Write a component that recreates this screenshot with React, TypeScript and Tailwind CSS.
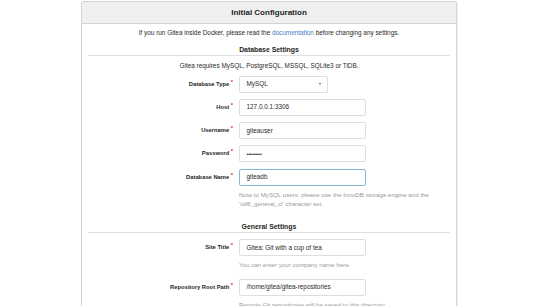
import React from "react";

const Label = ({ text }: { text: string }) => (
  <div className="w-[145px] mr-[6px] text-right text-[5.8px] font-bold text-[#1e1e1e] leading-[17px]">
    {text}
    <span className="relative -top-[2px] ml-[1.5px] text-[#db2828]">*</span>
  </div>
);

const Field = ({ label, children }: { label: string; children: React.ReactNode }) => (
  <div className="flex items-center h-[17px]">
    <Label text={label} />
    {children}
  </div>
);

const TextBox = ({ value, focus, password }: { value: string; focus?: boolean; password?: boolean }) => (
  <div
    className={`w-[127px] h-[17px] rounded-[2px] border bg-white pl-[6.5px] flex items-center text-[6.4px] text-[#2a2a2a] ${
      focus ? "border-[#85b7d9]" : "border-[#dedede]"
    }`}
  >
    {password ? <span className="text-[5.4px] tracking-[-0.2px]">•••••••••</span> : value}
  </div>
);

const App = () => {
  return (
    <div className="w-[550px] h-[306px] overflow-hidden bg-white" style={{ fontFamily: '"Liberation Sans", Arial, sans-serif' }}>
      <div className="ml-[81px] mt-[1px] w-[376px] border border-[#d4d4d5] rounded-t-[2px] shadow-[1px_0_1px_rgba(0,0,0,0.06)]">
        <div className="h-[22px] bg-[#f0f0f0] border-b border-[#d4d4d5] flex items-center justify-center text-[8px] font-bold text-[#1e1e1e]">
          Initial Configuration
        </div>
        <div className="px-[6px] pt-[5px] pb-[20px] flex flex-col">
          <p className="text-center text-[6.4px] leading-[8px] text-[#2a2a2a]">
            If you run Gitea inside Docker, please read the <span className="text-[#4183c4]">documentation</span> before changing any settings.
          </p>
          <h4 className="mt-[7.5px] text-center text-[6.9px] font-bold leading-[9px] pb-[1px] border-b border-[#e0e0e0] text-[#1e1e1e]">
            Database Settings
          </h4>
          <p className="mt-[6.5px] text-center text-[6.4px] leading-[8px] text-[#2a2a2a]">
            Gitea requires MySQL, PostgreSQL, MSSQL, SQLite3 or TiDB.
          </p>
          <div className="mt-[5.5px] flex flex-col gap-[6.25px]">
            <Field label="Database Type">
              <div className="w-[89px] h-[17px] rounded-[2px] border border-[#dedede] bg-white pl-[6.5px] pr-[6px] flex items-center justify-between text-[6.4px] text-[#2a2a2a]">
                <span>MySQL</span>
                <span className="w-0 h-0 border-l-[1.8px] border-r-[1.8px] border-t-[2.5px] border-l-transparent border-r-transparent border-t-[#555]" />
              </div>
            </Field>
            <Field label="Host">
              <TextBox value="127.0.0.1:3306" />
            </Field>
            <Field label="Username">
              <TextBox value="giteauser" />
            </Field>
            <Field label="Password">
              <TextBox value="" password />
            </Field>
            <Field label="Database Name">
              <TextBox value="giteadb" focus />
            </Field>
          </div>
          <p className="mt-[4px] ml-[151px] w-[205px] text-[6.2px] leading-[9px] text-[#9a9a9a]">
            Note to MySQL users: please use the InnoDB storage engine and the 'utf8_general_ci' character set.
          </p>
          <h4 className="mt-[14.5px] text-center text-[6.9px] font-bold leading-[9px] pb-[1px] border-b border-[#e0e0e0] text-[#1e1e1e]">
            General Settings
          </h4>
          <div className="mt-[6px]">
            <Field label="Site Title">
              <TextBox value="Gitea: Git with a cup of tea" />
            </Field>
          </div>
          <p className="mt-[4.5px] ml-[151px] text-[6.2px] leading-[8px] text-[#9a9a9a]">You can enter your company name here.</p>
          <div className="mt-[10px]">
            <Field label="Repository Root Path">
              <TextBox value="/home/gitea/gitea-repositories" />
            </Field>
          </div>
          <p className="mt-[5px] ml-[151px] text-[6.2px] leading-[8px] text-[#9a9a9a]">
            Remote Git repositories will be saved to this directory.
          </p>
        </div>
      </div>
    </div>
  );
};

export default App;
